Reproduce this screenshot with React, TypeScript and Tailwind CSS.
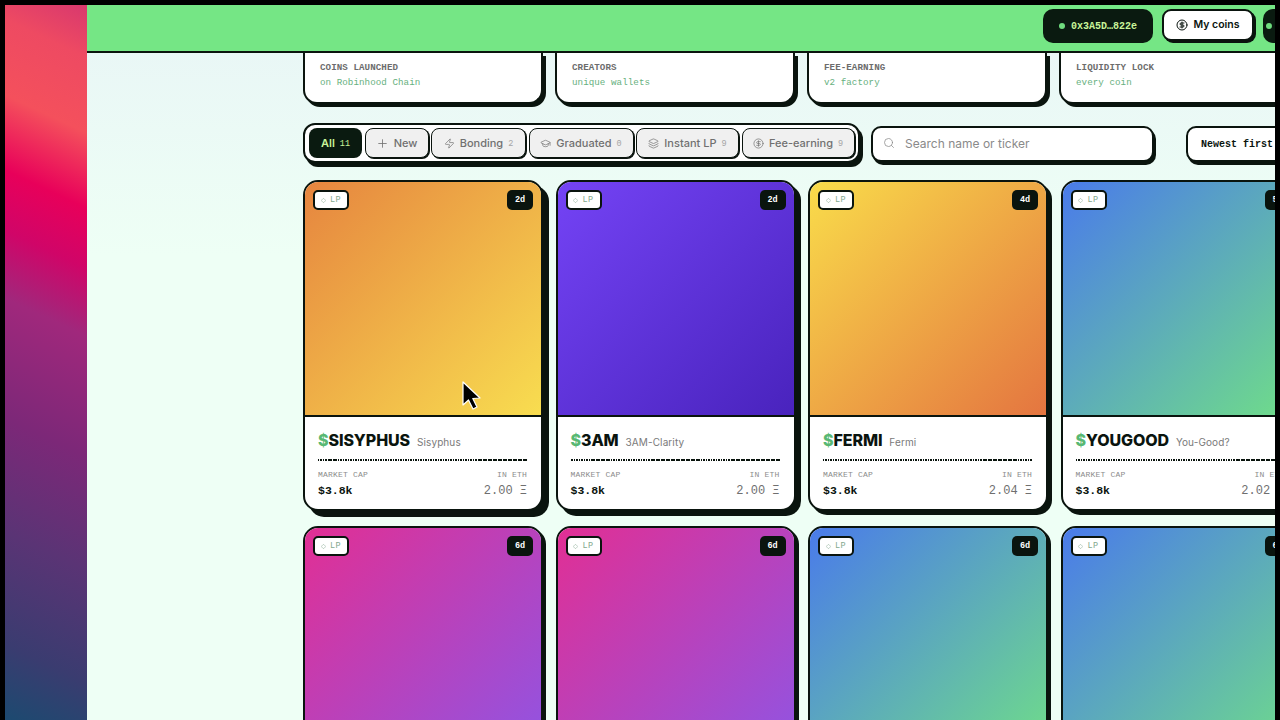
import { Plus, Zap, GraduationCap, Layers, CircleDollarSign, Search, Diamond } from "lucide-react";

const stats = [
  { a: "COINS LAUNCHED", b: "on Robinhood Chain" },
  { a: "CREATORS", b: "unique wallets" },
  { a: "FEE-EARNING", b: "v2 factory" },
  { a: "LIQUIDITY LOCK", b: "every coin" },
];

const chips = [
  { label: "New", count: "", Icon: Plus, w: "w-[64px]" },
  { label: "Bonding", count: "2", Icon: Zap, w: "w-[95px]" },
  { label: "Graduated", count: "0", Icon: GraduationCap, w: "w-[105px]" },
  { label: "Instant LP", count: "9", Icon: Layers, w: "w-[103px]" },
  { label: "Fee-earning", count: "9", Icon: CircleDollarSign, w: "w-[113px]" },
];

const orange = "bg-[linear-gradient(135deg,#e6853f,#f8dd50)]";
const violet = "bg-[linear-gradient(135deg,#7443f5,#4923bd)]";
const yellow = "bg-[linear-gradient(135deg,#f9dc4a,#e47540)]";
const blue = "bg-[linear-gradient(135deg,#4a7bea,#70de88)]";
const pink = "bg-[linear-gradient(135deg,#e12f94,#8f55e4)]";

const coins = [
  { t: "SISYPHUS", n: "Sisyphus", age: "2d", eth: "2.00", g: orange, s: "shadow-[6px_6px_0_#0a140e]" },
  { t: "3AM", n: "3AM-Clarity", age: "2d", eth: "2.00", g: violet, s: "shadow-[5px_5px_0_#0a140e]" },
  { t: "FERMI", n: "Fermi", age: "4d", eth: "2.04", g: yellow, s: "shadow-[4px_4px_0_#0a140e]" },
  { t: "YOUGOOD", n: "You-Good?", age: "5d", eth: "2.02", g: blue, s: "shadow-[4px_4px_0_#0a140e]" },
  { t: "WAGMI", n: "Wagmi", age: "6d", eth: "2.00", g: pink, s: "shadow-[3px_3px_0_#0a140e]" },
  { t: "NGMI", n: "Ngmi", age: "6d", eth: "2.00", g: pink, s: "shadow-[3px_3px_0_#0a140e]" },
  { t: "HODL", n: "Hodl", age: "6d", eth: "2.00", g: blue, s: "shadow-[3px_3px_0_#0a140e]" },
  { t: "MOON", n: "Moon", age: "6d", eth: "2.00", g: blue, s: "shadow-[3px_3px_0_#0a140e]" },
];

const mono = "font-['Liberation_Mono','DejaVu_Sans_Mono',monospace]";
const sans = "font-['Inter','Liberation_Sans',sans-serif]";

function Card({ c }: { c: (typeof coins)[number] }) {
  return (
    <div className={`w-[240px] h-[331px] shrink-0 rounded-[15px] border-2 border-[#0a140e] bg-white overflow-hidden flex flex-col ${c.s}`}>
      <div className={`h-[235px] shrink-0 border-b-2 border-[#0a140e] pt-[8px] pl-[8px] pr-[7px] flex items-start justify-between ${c.g}`}>
        <div className={`h-[20px] w-[36px] rounded-[5px] border-2 border-[#0a140e] bg-white flex items-center justify-center gap-[4px] text-[8.5px] tracking-[0.4px] text-[#84a98e] ${mono}`}>
          <Diamond size={5} strokeWidth={2.5} />
          <span>LP</span>
        </div>
        <div className={`h-[20px] w-[26px] mr-px rounded-[5px] bg-[#0a140e] flex items-center justify-center text-[8.5px] font-bold text-white ${mono}`}>
          {c.age}
        </div>
      </div>
      <div className="flex-1 pl-[13px] pr-[14px] pt-[13px]">
        <div className="flex items-baseline gap-[7px] h-[20px]">
          <span className={`text-[16px] leading-[20px] font-extrabold tracking-[-0.1px] text-[#0a140e] ${sans}`}>
            <span className="text-[#58b873]">$</span>
            {c.t}
          </span>
          <span className={`text-[10px] tracking-[0.1px] text-[#7a7a7a] ${sans}`}>{c.n}</span>
        </div>
        <div className="mt-[9px] h-[2px] bg-[repeating-linear-gradient(90deg,#0a140e_0_1.5px,transparent_1.5px_2.5px)]" />
        <div className={`mt-[9px] flex justify-between text-[8px] leading-[10px] tracking-[0.2px] text-[#8c8c8c] ${mono}`}>
          <span>MARKET CAP</span>
          <span>IN ETH</span>
        </div>
        <div className={`mt-[3px] flex justify-between text-[11.5px] leading-[16px] ${mono}`}>
          <span className="font-bold text-[#0a140e]">$3.8k</span>
          <span className="text-[12px] text-[#6f6f6f]">{c.eth} Ξ</span>
        </div>
      </div>
    </div>
  );
}

export default function App() {
  return (
    <div className="relative w-[1280px] h-[720px] bg-black pt-[5px] px-[5px] overflow-hidden flex">
      <div className="w-[82px] shrink-0 bg-[linear-gradient(205deg,#d8386e_0%,#ee4a62_7%,#f4505c_17%,#e8005a_27%,#d00568_35%,#a0287c_44%,#7c2878_60%,#5a3475_75%,#3a3c70_90%,#1c4a70_100%)]" />
      <div className="flex-1 min-w-0 flex flex-col overflow-hidden bg-[linear-gradient(180deg,#e8f5f6_0%,#eefff5_35%)]">
        <header className="h-[48px] shrink-0 bg-[#75e685] border-b-2 border-[#0a140e] pl-[956px] flex items-start gap-[9px] pt-[4px]">
          <div className={`w-[110px] h-[34px] shrink-0 rounded-[10px] bg-[#0a1a10] flex items-center justify-center gap-[6px] text-[10px] font-bold text-[#c9f49a] ${mono}`}>
            <span className="w-[6px] h-[6px] rounded-full bg-[#6fdc7e]" />
            0x3A5D…822e
          </div>
          <div className={`w-[92px] h-[32px] shrink-0 rounded-[9px] border-2 border-[#0a140e] bg-white shadow-[2px_2px_0_#0a140e] flex items-center justify-center gap-[5px] text-[10.5px] font-semibold text-[#0a140e] ${sans}`}>
            <CircleDollarSign size={12} />
            My coins
          </div>
          <div className="w-[40px] h-[34px] shrink-0 rounded-[10px] bg-[#0a1a10] flex items-center pl-[3px]">
            <span className="w-[6px] h-[6px] rounded-full bg-[#6fdc7e]" />
          </div>
        </header>
        <main className="flex-1 min-h-0 overflow-hidden pl-[216px]">
          <div className="flex gap-[12px]">
            {stats.map((s) => (
              <div key={s.a} className={`w-[240px] h-[51px] shrink-0 rounded-b-[14px] border-2 border-t-0 border-[#0a140e] bg-white shadow-[3px_3px_0_#0a140e] pl-[15px] pt-[7px] text-[9.2px] leading-[15px] tracking-[0.06px] ${mono}`}>
                <div className="font-bold text-[#6c6c6c]">{s.a}</div>
                <div className="text-[#66b07e]">{s.b}</div>
              </div>
            ))}
          </div>
          <div className="mt-[19px] flex items-start w-[1100px]">
            <div className="w-[557px] h-[40px] shrink-0 rounded-[12px] border-2 border-[#0a140e] bg-white shadow-[3px_4px_0_#0a140e] flex items-center gap-[2.5px] px-[4px]">
              <div className={`w-[53px] h-[30px] shrink-0 rounded-[8px] bg-[#0a1a10] flex items-center justify-center gap-[5px] text-[11px] font-semibold text-[#c9f49a] ${sans}`}>
                All <span className={`mt-[2px] text-[8.5px] font-normal ${mono}`}>11</span>
              </div>
              {chips.map(({ label, count, Icon, w }) => (
                <div key={label} className={`${w} h-[30px] shrink-0 rounded-[8px] border-[1.5px] border-[#0a140e] bg-[#f0f0f0] shadow-[1px_1px_0_#0a140e] flex items-center justify-center gap-[5px] text-[11px] font-medium text-[#707070] ${sans}`}>
                  <Icon size={label === "New" ? 13 : 11} strokeWidth={1.5} />
                  <span>{label}</span>
                  {count && <span className={`mt-[2px] text-[8.5px] text-[#a5a5a5] ${mono}`}>{count}</span>}
                </div>
              ))}
            </div>
            <div className={`ml-[11px] w-[283px] h-[36px] mt-[3px] shrink-0 rounded-[10px] border-2 border-[#0a140e] bg-white shadow-[2px_3px_0_#0a140e] flex items-center gap-[10px] pl-[10px] text-[12px] text-[#8a8a8a] ${sans}`}>
              <Search size={12} strokeWidth={1.5} className="-mt-[2px]" />
              Search name or ticker
            </div>
            <div className={`ml-[32px] w-[130px] h-[36px] mt-[3px] shrink-0 rounded-[10px] border-2 border-[#0a140e] bg-white shadow-[2px_3px_0_#0a140e] flex items-center pl-[13px] text-[10px] font-bold text-[#0a140e] ${mono}`}>
              Newest first
            </div>
          </div>
          <div className="mt-[17px] grid grid-cols-[repeat(4,240px)] gap-x-[12.5px] gap-y-[15px] w-[1100px]">
            {coins.map((c) => (
              <Card key={c.t} c={c} />
            ))}
          </div>
        </main>
      </div>
      <svg className="absolute left-[460px] top-[380px]" width="24" height="32" viewBox="0 0 24 32">
        <path d="M3 2 L3 25 L8.5 20 L13 29 L17 27 L12.8 18.5 L20 18 Z" fill="#000" stroke="#fff" strokeWidth="1.2" strokeLinejoin="round" />
      </svg>
    </div>
  );
}
